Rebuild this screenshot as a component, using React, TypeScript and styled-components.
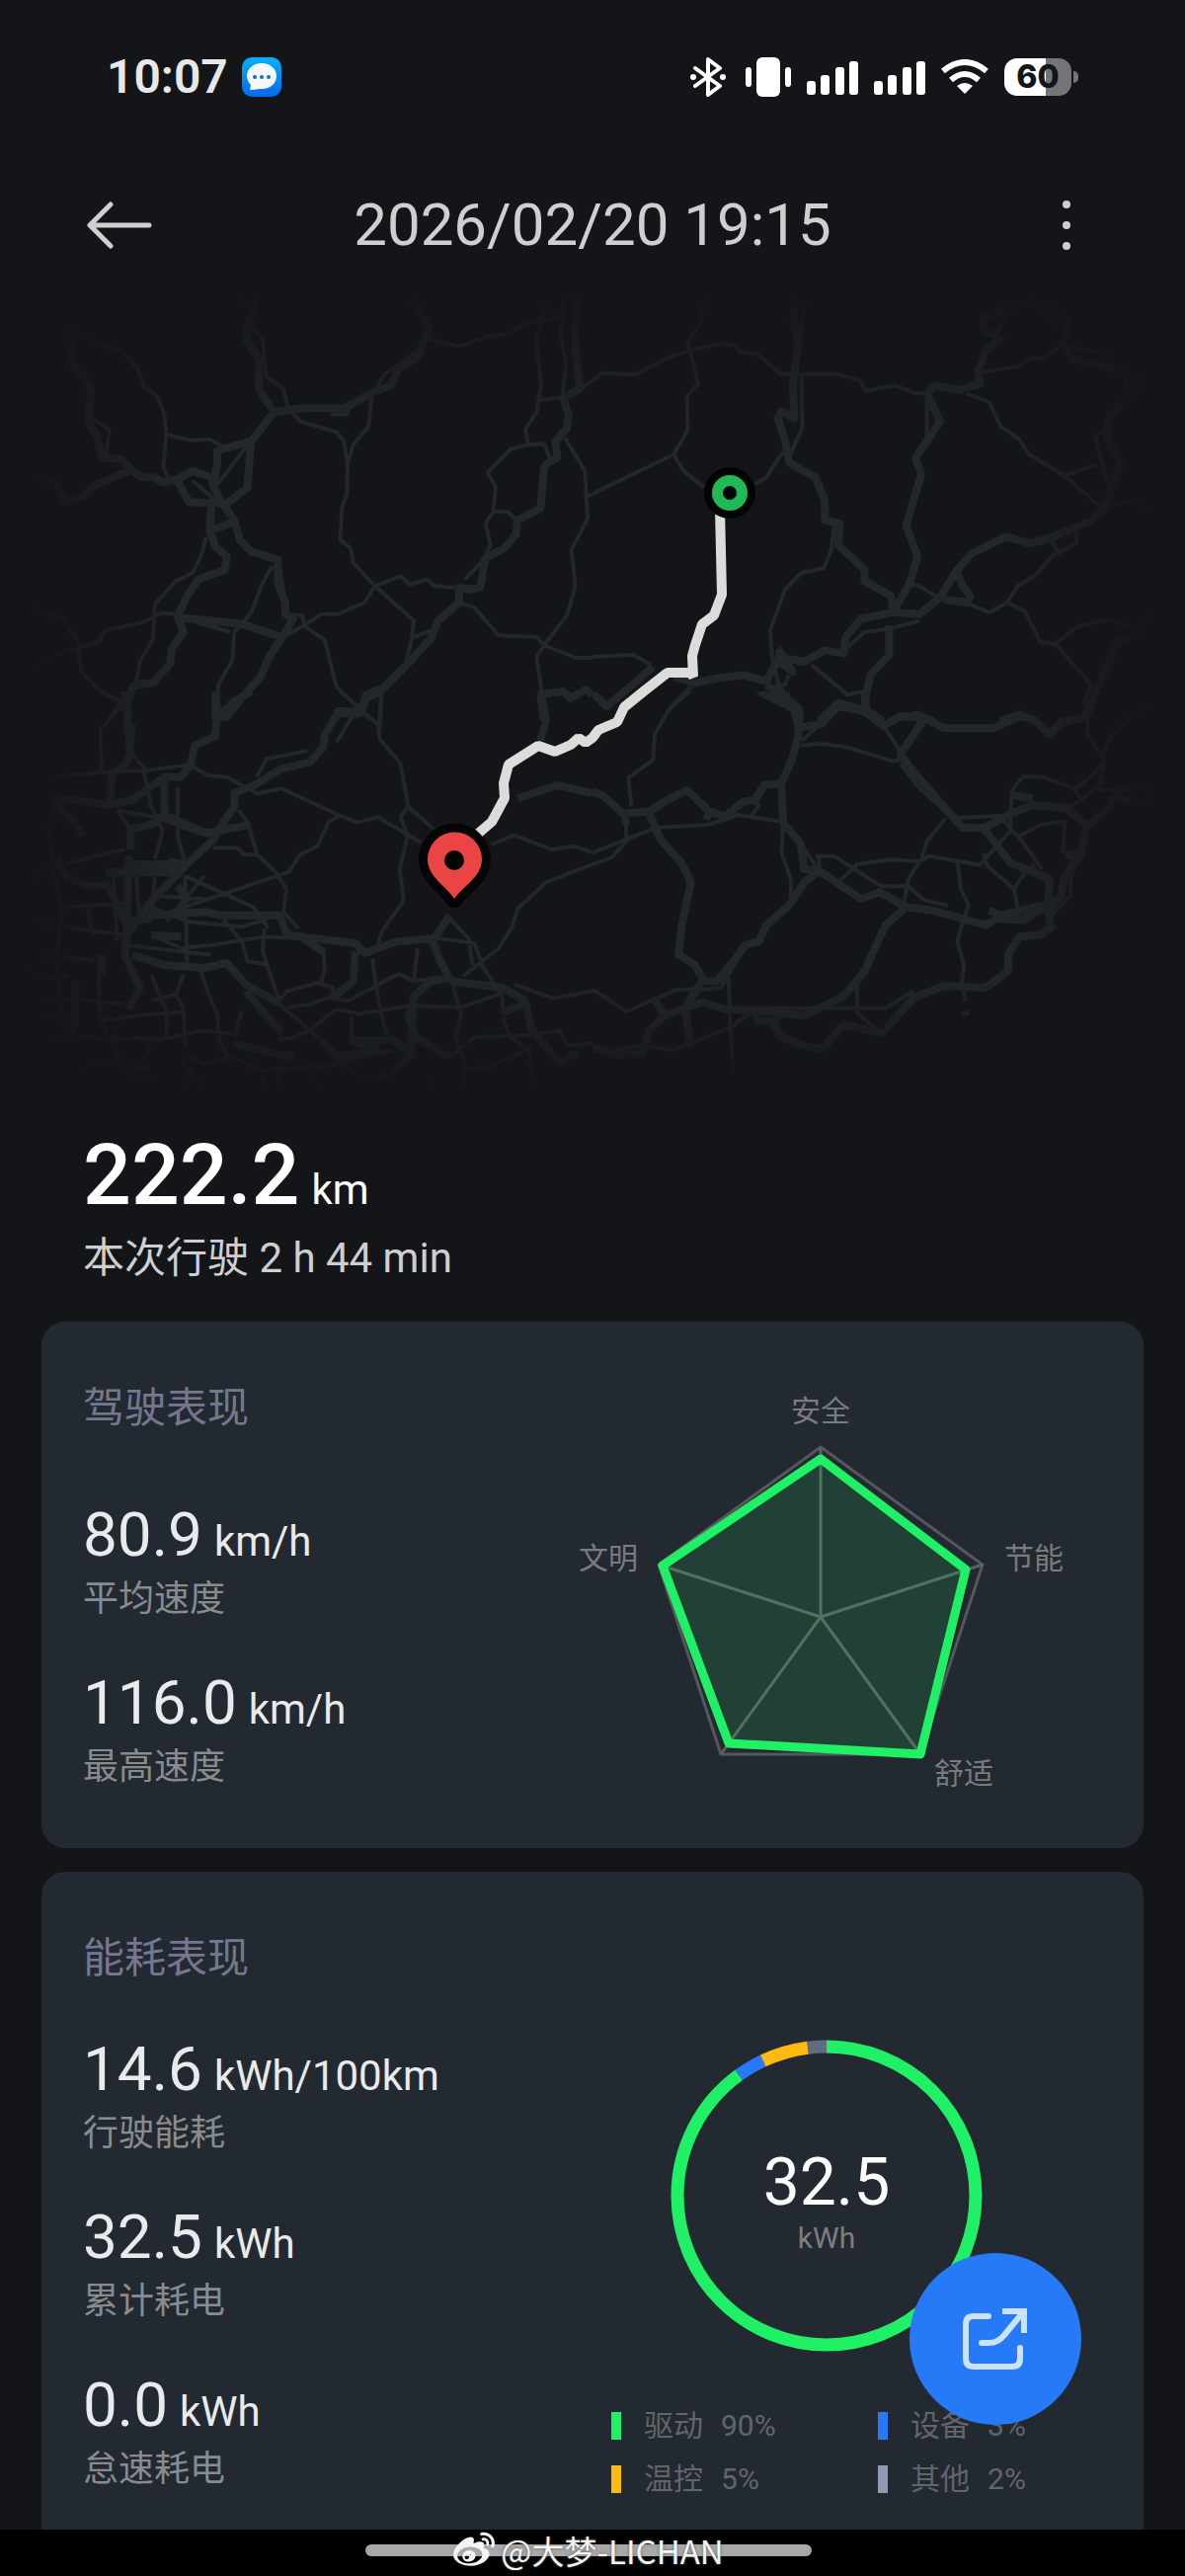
import styled, { createGlobalStyle } from "styled-components";
import { FaWeibo } from "react-icons/fa";

const GREEN = "#20f066";
const BLUE = "#267af8";
const YELLOW = "#ffba0f";

const usage = [
  { name: "驱动", percent: 90, color: GREEN, arc: GREEN },
  { name: "设备", percent: 3, color: BLUE, arc: BLUE },
  { name: "温控", percent: 5, color: YELLOW, arc: YELLOW },
  { name: "其他", percent: 2, color: "#8f9ab5", arc: "#5f6b7f" },
];

const driving = [
  { value: "80.9", unit: "km/h", label: "平均速度" },
  { value: "116.0", unit: "km/h", label: "最高速度" },
];

const energy = [
  { value: "14.6", unit: "kWh/100km", label: "行驶能耗" },
  { value: "32.5", unit: "kWh", label: "累计耗电" },
  { value: "0.0", unit: "kWh", label: "怠速耗电" },
];

// clockwise from the top
const scores = [0.93, 0.9, 1, 0.92, 0.98];

// the base map is cut in four tiles, each in its own 1568 x 1350 grid
const tiles = [
  {
    x: 0,
    y: 280,
    major:
      "M185,150L188,265 240,335 235,445 258,490 270,550 320,555 350,590 375,610 410,610 430,625 470,615 510,590 560,610 565,640 590,690 620,740 635,800 665,835 735,860 735,930 755,990 755,1025 775,1040 750,1090 710,1160 690,1215 640,1280 590,1350 570,1340 570,1275M80,615L145,622 172,685 225,665 250,635 340,590M680,40L665,100 650,190 685,250 685,340 725,412 665,500 600,520 575,530 575,570 565,640M665,500L660,560 655,640 600,690 500,685 470,620M725,412L800,400 910,400 990,350 1035,330 1055,280 1105,245 1135,160 1110,100 1085,80 1120,40M875,412L925,412M560,690L555,770 570,820 600,850 595,890 525,920 495,970 470,1030 485,1080 455,1130 450,1175 405,1235 355,1240 335,1290 340,1350M470,1035L640,1055 745,1095M560,770L620,745M1525,50L1522,220 1535,340 1490,370 1505,420 1500,460 1470,500 1475,550 1445,570 1440,580 1430,705 1370,740 1365,785 1335,825 1285,855 1270,945 1250,950 1215,945 1215,990 1160,1045 1140,1100 1080,1175 1015,1250 970,1270 955,1320 895,1320 885,1350M1425,1270L1490,1260 1510,1280 1550,1255 1568,1270M1430,1270L1440,1350",
    minor:
      "M190,165L255,205 315,220 365,280 380,335 415,360 435,420 440,480 432,580 445,610M440,480L505,497 555,495 595,520M665,150L695,190 705,305 750,340 762,400 795,440 890,472 910,500 920,570 918,660 905,700 900,800 928,825 935,870 992,940 1095,1045 1090,1100 1075,1170M600,40L665,90M990,350L1015,300 1105,225M985,350L975,455 935,510 920,570M1135,190L1215,212 1290,182 1345,175 1395,142 1485,125M1445,30L1438,130 1420,190 1432,330 1420,410 1390,465 1398,510 1350,525 1290,595 1312,640 1305,715 1285,750 1298,815 1280,860 1230,920M1430,375L1490,365M1398,510L1440,508 1455,550M1490,40L1485,190 1498,260 1488,365M1495,490L1548,590 1555,735 1512,830 1523,940 1500,1030 1440,1120 1420,1155 1435,1270M1305,715L1345,715 1365,740M992,940L1060,910 1085,935 1130,920 1150,940 1210,945M992,940L965,990 895,1025 850,1025 805,1060 750,1095M805,1060L860,1105 890,1245 985,1350M1215,990L1255,1005 1320,1090 1420,1095 1440,1120 1525,1158 1568,1158M1095,1095L1140,1075M755,1025L800,1030 805,1060M545,790L535,840 510,900 465,925 410,995 405,1100 370,1170 360,1235 285,1350M720,880L695,930 665,1020 640,1055 620,1080 615,1165 578,1240 575,1340M470,1025L425,1022 385,1048 280,1075 260,1110 165,1140 80,1195M60,950L105,1020 160,1035 205,1105 215,1200 255,1250 320,1290M650,520L570,640M510,620L600,710M240,430L290,465 280,540M1010,1250L1005,1350M740,880L755,990M520,1050L610,1080M1568,315L1535,345M1568,660L1550,670",
  },
  {
    x: 600,
    y: 280,
    major:
      "M540,60L530,130 545,200 530,330 535,430 500,410 490,430 510,500 520,565 590,610 615,680 615,740 655,750 650,815 720,890 720,925 790,970 795,1015M885,355L920,440 855,550 870,600 830,755 860,850 840,930 800,1010M885,355L905,330 970,345 1025,325 1020,290 1040,225 1080,190 1035,160 1035,125 1075,105 1165,70M1185,85L1235,95 1260,150 1245,200 1270,250 1340,270 1440,300 1440,350 1370,420 1360,490 1400,565 1355,700 1325,740 1240,780 1210,795 1155,810 1095,790 1005,840 965,890 920,975 865,1025 795,1020 710,1040 670,1095 665,1145 615,1135 560,1170 510,1160 490,1130M965,900L980,940 1000,970 990,990 930,980M785,1060L785,1150 735,1210 720,1290 725,1325M215,1215L270,1235 330,1220 400,1210 460,1230 490,1165 530,1200 490,1140M460,1240L545,1310 550,1350M600,1350L650,1295 720,1315 770,1350M790,1350L860,1330 900,1350M1080,1350L1130,1330 1170,1350M1310,1330L1340,1240 1390,1110 1440,1090 1500,1000M0,1265L38,1305 90,1255 160,1185",
    minor:
      "M0,318L25,292 110,298 215,238 330,205 375,207 390,228 435,235 498,296 645,296 708,315 722,348 800,330 855,355 885,355M320,30L290,90 288,140 252,200 280,325 250,365 252,465 215,540 0,660M215,540L240,590 295,640M430,630L460,610 500,538 525,535 555,460 553,300M575,20L545,200M885,360L885,490M640,750L632,830 612,885 552,900 510,950 470,1075 475,1150 490,1230 530,1310M990,355L1050,382 1080,455 1130,495 1155,540 1250,605 1345,700 1420,685 1500,710M1250,605L1335,570M1355,460L1330,490 1370,650M1030,290L1130,272 1160,245 1190,250 1240,210M1120,85L1060,180M1180,90L1230,170M1250,210L1365,235 1400,300M830,940L860,937 905,968 990,992 1050,1020 1098,990 1145,1018 1185,1110 1225,1115 1320,1240 1300,1300M1098,990L1125,940 1170,910 1215,850 1280,810 1280,775M1210,795L1240,850M1225,1115L1285,1062 1365,1042 1440,1070M0,1155L108,1148 155,1180M262,1245L205,1310 185,1350M580,1180L675,1270 720,1260M865,1045L785,1070 720,1080 670,1130M460,1250L510,1240 520,1210M1410,300L1415,350 1450,390M1440,290L1485,330",
  },
  {
    x: 0,
    y: 700,
    major:
      "M570,0L575,60 570,135 515,165 505,220 480,260 435,260 350,330 290,345 200,330 150,330M665,0L620,30 575,80M330,0L345,190 330,225 295,250 290,345M1010,0L970,20 955,65 895,65 860,130 855,170 820,215 745,235 680,280 620,310 620,350 590,400 565,450 490,530 440,590 390,650 335,740 330,800 370,900 340,970M435,260L435,375 545,430 660,405M345,480L345,420 410,400 435,375M340,500L335,760M345,525L490,525M280,550L480,550M390,680L545,670 580,680 740,680 760,740 940,765 965,795 1050,760 1150,750 1190,680M400,740L480,745M350,800L430,830 540,840 600,825 650,890 735,945M650,910L700,980 745,1035M1145,760L1165,820 1190,870 1140,880 1100,920 1080,990 1100,1050 1190,1110M1190,880L1330,900 1390,940 1405,1020 1480,1130 1530,1095M940,790L935,880 880,930M1390,950L1330,975M1370,325L1475,285 1568,310M1430,0L1445,90 1430,150M180,370L220,440M130,300L150,340 180,380M850,1060L890,1110 1000,1090 930,1060 1040,1060 1100,1110M620,1070L760,1110 780,1100M200,880L200,1000 180,1060M270,800L270,860M150,510L170,560 230,590 290,590M290,600L330,700 400,690M1090,1100L1040,1160M470,590L500,640M790,740L860,795M1095,920L1085,1110",
    minor:
      "M260,0L330,35 265,115 270,240M355,100L345,190 385,235M130,262L270,245 385,240 505,222M505,225L550,255 600,260 680,310 745,295 895,375 945,398 1000,382 1115,460M680,260L705,205 815,180M890,155L930,80 960,65M900,0L1000,100 1005,145 1060,220 1080,350 1150,420M1010,0L1003,140M1080,350L1060,380 1078,440 1058,540 1068,635 1010,730 995,790M895,380L870,395 840,470 795,495 765,548 605,610 395,690M630,360L655,395 680,495 730,550 758,600 750,670 790,720M565,475L630,475 645,495 680,495M490,560L670,655 710,720M380,240L400,350 430,420 410,510M470,290L470,440 490,520 445,510M310,360L420,385 550,440M310,360L345,420M130,540L250,500 330,480M150,340L125,400 145,560 165,660 150,800 160,950 180,1050M165,655L330,645M80,580L160,500M80,700L330,740M90,800L250,815M230,650L245,740M75,720L80,860M80,940L200,935 330,950M260,800L265,1000 300,1080M400,740L480,780 560,770 700,745 790,750M590,690L640,760 655,820 710,830M700,720L695,790 715,860 740,940M530,840L545,900 575,980 580,1060 605,1110M485,860L465,920 400,940M465,920L485,960 490,1080M400,860L440,970 440,1050M735,945L760,910 840,885 880,900 880,930 920,940 1055,858 1095,880 1150,870M760,960L820,950 880,925M735,945L850,1060M855,790L860,840 850,885M985,810L1000,930 1015,1010 1030,1060M890,965L950,980 1080,955 1220,960 1320,920M890,965L820,1030 780,1050M930,990L930,1060M1190,690L1240,750 1250,830M1160,750L1255,765 1280,840 1330,930 1330,980M1105,780L1095,880M1195,880L1220,980 1205,1050 1230,1130 1225,1220M1225,865L1320,780 1355,715 1370,660 1445,580 1568,525M1300,465L1360,437 1460,480 1520,470 1568,490M1360,890L1465,932 1568,910M1190,1110L1255,1050 1405,1045 1480,1030 1500,1075 1568,1070M1230,1148L1300,1140 1400,1085 1410,1200M1330,990L1350,1050 1400,1090M350,1050L420,1060 530,1030 620,1042M620,1050L640,970M745,1040L740,1060 780,1050M605,1110L540,1135 500,1110M400,1080L350,1160M480,1120L550,1220M690,1150L700,1230M740,1130L735,1240M80,1180L200,1170 240,1120 400,1150M270,1000L400,980 480,975M300,1040L320,1160 410,1180M820,1150L850,1220M900,1130L960,1180 1040,1160M1140,1160L1150,1210 1040,1240 920,1220M500,1170L500,1230M490,560L495,840M390,650L500,700 640,715 710,690M300,560L310,760M360,560L370,700M400,620L540,630M330,770L560,800M410,560L400,680M80,1050L350,1055M90,870L180,865M80,980L160,1000 210,1060M610,1110L690,1150 850,1140 1040,1090M540,560L440,700",
  },
  {
    x: 600,
    y: 700,
    major:
      "M440,0L545,60 545,130 530,200 500,280 455,285 430,330 400,335 350,380 310,365 250,300 190,335 150,365 80,370 25,315 0,305M150,370L180,450 235,520 260,580 235,720 228,800 270,830 295,880 330,880 380,810 405,770 440,760 460,710 520,650 560,580 600,545 710,630 760,610 830,655 900,665 1040,710 1070,690 1140,695 1200,650 1215,715 1185,740 1130,745 1100,800 1100,850 1040,900 930,895 850,930 765,1040 665,1010 610,1085 570,1080 500,1050 480,1015 490,985M300,390L310,365M500,290L505,400 550,460 560,540 600,545M545,110L605,100 650,45 720,60 770,105 815,75 880,80 930,112 1060,112 1130,75 1165,85 1210,130 1240,95 1300,80 1335,0M880,80L815,190 850,245 960,390 980,415 1035,415 1105,520 1210,570 1205,650M1035,415L1110,370 1165,345 1255,355 1310,410 1290,490 1250,500M1310,410L1370,350 1380,320 1440,340 1500,320M1115,315L1165,325M1250,560L1240,620 1210,660M1290,490L1250,560M830,655L775,710 720,850 665,925 560,985 430,970 350,965 290,945 190,985 150,1030 130,1100 60,1105 0,1080M290,880L245,960 258,1080M165,940L190,980M720,0L725,55M430,975L440,1000 495,1005M1050,665L1080,680 1190,650M985,970L988,985M85,370L90,405",
    minor:
      "M258,0L205,50 165,130 160,208 95,262 103,350M88,380L90,455 50,505 0,525M0,490L165,415 305,405 385,375 500,395M345,380L420,330 440,345 420,380M515,0L545,130M550,165L600,158 675,170 795,212 820,205M555,150L600,100M770,105L820,190M935,385L885,455 870,510 835,570 825,640M505,400L500,490 525,570 525,640M555,470L600,545M590,500L640,500 765,592 835,592 880,635 940,650M600,500L600,545M655,575L700,525 790,510 865,517 890,500 1025,527 1105,425 1110,300 1140,258 1190,260 1275,295 1290,325M1275,295L1325,255 1355,210 1310,130 1310,70M1355,215L1340,290 1260,355M1340,300L1500,295M1350,190L1370,140 1430,70 1500,35M960,385L1075,378 1130,445 1190,540M1130,440L1185,405 1250,395 1245,490M1035,490L1045,530 1115,600 1130,680M1115,600L1145,550 1170,525M965,510L975,600 995,650 980,700 965,760 983,830 978,880 987,940M1300,490L1265,560 1265,620 1215,680M700,890L700,975 765,1040M295,905L225,905 90,972 0,905M290,905L340,900 390,800M360,870L365,1020 373,1165M420,975L365,1020 300,1050 210,1090 130,1075 60,1090M410,962L775,962 850,910M815,220L870,300 940,370",
  },
];

const route =
  "M729,515L731,602 723,623 711,632 704,653 701,664 702,685 699,681 676,681 653,699 632,716 625,731 606,739 600,747 593,752 586,747 578,754 562,761 545,755 515,774 510,793 511,808 498,832 484,844";

const polar = (cx: number, cy: number, r: number, index: number) => {
  const angle = (index * 2 * Math.PI) / 5;
  return `${Math.round(cx + r * Math.sin(angle))},${Math.round(cy - r * Math.cos(angle))}`;
};

const StatusIcons = () => (
  <IconRow>
    <svg width="40" height="40" viewBox="0 0 40 40" fill="none" stroke="#fff" strokeWidth="4" strokeLinecap="round" strokeLinejoin="round">
      <path d="M5 11L30 29 18 38V2L30 11 5 29" />
      <circle cx="3" cy="20" r="3" fill="#fff" stroke="none" />
      <circle cx="33" cy="20" r="3" fill="#fff" stroke="none" />
    </svg>
    <svg width="46" height="40" viewBox="0 0 46 40" fill="#fff">
      <rect x="0" y="10" width="6" height="20" rx="3" />
      <rect x="11" y="0" width="24" height="40" rx="6" />
      <rect x="40" y="10" width="6" height="20" rx="3" />
    </svg>
    <Signal />
    <Signal />
    <svg width="48" height="36" viewBox="0 0 48 36" fill="none" stroke="#fff" strokeWidth="6">
      <path d="M2 12Q24 -6 46 12" />
      <path d="M10 21Q24 9 38 21" />
      <path d="M24 35L16 27Q24 21 32 27Z" fill="#fff" stroke="none" />
    </svg>
    <Battery>
      <BatteryLevel>60</BatteryLevel>
      <BatteryNub />
    </Battery>
  </IconRow>
);

const Signal = () => (
  <svg width="52" height="40" viewBox="0 0 52 40" fill="#fff">
    <rect x="0" y="24" width="9" height="14" rx="3" />
    <rect x="14" y="18" width="9" height="20" rx="3" />
    <rect x="29" y="10" width="9" height="28" rx="3" />
    <rect x="43" y="4" width="9" height="34" rx="3" />
  </svg>
);

const RouteMap = () => (
  <MapArea viewBox="0 300 1200 830" role="img" aria-label="行驶路线">
    <MapBase>
      {tiles.map((tile) => (
        <svg
          key={`${tile.x}-${tile.y}`}
          x={tile.x}
          y={tile.y}
          width="600"
          height="450"
          viewBox="0 0 1568 1350"
          preserveAspectRatio="none"
        >
          <Road d={tile.minor} $width={4} />
          <Road d={tile.major} $width={8} />
        </svg>
      ))}
    </MapBase>
    <path d={route} fill="none" stroke="#dcdcda" strokeWidth="10" strokeLinejoin="bevel" />
    <circle cx="739" cy="499" r="26" fill="#030504" />
    <circle cx="739" cy="499" r="18" fill="#20b956" />
    <circle cx="739" cy="499" r="7" fill="#030504" />
    <path
      d="M460 910C453 898 433 888 433 870A27 27 0 0 1 488 870C488 888 468 898 460 910Z"
      fill="#ea4444"
      stroke="#050506"
      strokeWidth="18"
      strokeLinejoin="round"
      paintOrder="stroke"
    />
    <circle cx="460" cy="871" r="10" fill="#050506" />
  </MapArea>
);

const Radar = () => {
  const cx = 271;
  const cy = 239;
  return (
    <RadarChart viewBox="0 0 554 420" role="img" aria-label="驾驶评分">
      <polygon
        points={scores.map((_, i) => polar(cx, cy, 172, i)).join(" ")}
        fill="none"
        stroke="#56575c"
        strokeWidth="3"
      />
      {scores.map((_, i) => (
        <path key={i} d={`M${cx},${cy}L${polar(cx, cy, 172, i)}`} stroke="#5b605f" strokeWidth="3" />
      ))}
      <polygon
        points={scores.map((score, i) => polar(cx, cy, 172 * score, i)).join(" ")}
        fill="rgba(32, 240, 102, 0.12)"
        stroke={GREEN}
        strokeWidth="9"
        strokeLinejoin="round"
      />
      <text x="271" y="41" textAnchor="middle">安全</text>
      <text x="457" y="190">节能</text>
      <text x="386" y="408">舒适</text>
      <text x="26" y="190">文明</text>
    </RadarChart>
  );
};

const Donut = () => {
  let start = 0;
  return (
    <DonutBox>
      <svg viewBox="0 0 316 316" fill="none" strokeWidth="13">
        {usage.map(({ name, percent, arc }) => {
          const offset = -start;
          start += percent;
          return (
            <circle
              key={name}
              cx="158"
              cy="158"
              r="151"
              pathLength="100"
              stroke={arc}
              strokeDasharray={`${percent} ${100 - percent}`}
              strokeDashoffset={offset}
              transform="rotate(-90 158 158)"
            />
          );
        })}
      </svg>
      <DonutText>
        <DonutValue>32.5</DonutValue>
        <DonutUnit>kWh</DonutUnit>
      </DonutText>
    </DonutBox>
  );
};

const StatList = ({ items }: { items: typeof driving }) => (
  <Stats>
    {items.map(({ value, unit, label }) => (
      <Stat key={label}>
        <StatValue>
          {value}
          <Unit>{unit}</Unit>
        </StatValue>
        <StatLabel>{label}</StatLabel>
      </Stat>
    ))}
  </Stats>
);

const App = () => {
  return (
    <Page>
      <GlobalStyle />
      <StatusBar>
        <Clock>10:07</Clock>
        <svg width="40" height="40" viewBox="0 0 40 40">
          <defs>
            <linearGradient id="message" x1="0" y1="0" x2="0" y2="1">
              <stop offset="0" stopColor="#04b0fb" />
              <stop offset="1" stopColor="#0768ee" />
            </linearGradient>
          </defs>
          <rect width="40" height="40" rx="10" fill="url(#message)" />
          <path d="M20 6C11 6 5 12 5 19C5 23 7 26 9 28L8 33C14 33 15 32 20 32C29 32 35 26 35 19S29 6 20 6Z" fill="#f4f8fd" />
          <g fill="#1670b8">
            <circle cx="13" cy="20" r="2" />
            <circle cx="20" cy="20" r="2" />
            <circle cx="27" cy="20" r="2" />
          </g>
        </svg>
        <StatusIcons />
      </StatusBar>
      <Header>
        <IconButton aria-label="返回">
          <svg width="66" height="48" viewBox="0 0 66 48" fill="none" stroke="#cfcfd0" strokeWidth="5" strokeLinecap="round" strokeLinejoin="round">
            <path d="M24 3L3 24 24 45M3 24H63" />
          </svg>
        </IconButton>
        <Title>2026/02/20 19:15</Title>
        <IconButton aria-label="更多">
          <svg width="66" height="52" viewBox="0 0 66 52" fill="#cfcfd0">
            <circle cx="34" cy="5" r="4" />
            <circle cx="34" cy="26" r="4" />
            <circle cx="34" cy="47" r="4" />
          </svg>
        </IconButton>
      </Header>
      <RouteMap />
      <Summary>
        <Distance>
          222.2
          <Unit>km</Unit>
        </Distance>
        <Duration>本次行驶 2 h 44 min</Duration>
      </Summary>
      <Card>
        <div>
          <CardTitle $gap={64}>驾驶表现</CardTitle>
          <StatList items={driving} />
        </div>
        <Radar />
      </Card>
      <Card $last>
        <div>
          <CardTitle $gap={48}>能耗表现</CardTitle>
          <StatList items={energy} />
        </div>
        <Consumption>
          <Donut />
          <Legend>
            {usage.map(({ name, percent, color }) => (
              <LegendItem key={name}>
                <Swatch $color={color} />
                <LegendName>{name}</LegendName>
                <span>{percent}%</span>
              </LegendItem>
            ))}
          </Legend>
        </Consumption>
      </Card>
      <BottomBar>
        <HomeIndicator />
        <Watermark>
          <FaWeibo size={42} />
          @大梦-LICHAN
        </Watermark>
      </BottomBar>
      <ShareButton aria-label="分享">
        <svg width="66" height="62" viewBox="0 0 66 62" fill="none" stroke="#cbe1fd" strokeWidth="6" strokeLinecap="round" strokeLinejoin="round">
          <path d="M26 8H11Q3 8 3 16V51Q3 59 11 59H50Q58 59 58 51V40" />
          <path d="M40 3H62V25" strokeLinecap="butt" strokeLinejoin="miter" />
          <path d="M61 4L42 27Q36 35 26 35H19" />
        </svg>
      </ShareButton>
    </Page>
  );
};

const GlobalStyle = createGlobalStyle`
  * {
    box-sizing: border-box;
  }

  body {
    margin: 0;
    background: #131519;
  }

  button {
    padding: 0;
    border: none;
    background: none;
    cursor: pointer;
  }

  svg {
    display: block;
  }
`;

const Page = styled.main`
  display: flex;
  flex-direction: column;
  min-height: 100vh;
  background: #131519;
  color: #e9eaec;
  font-family: Roboto, "Noto Sans CJK SC", sans-serif;
`;

const StatusBar = styled.div`
  display: flex;
  align-items: center;
  gap: 14px;
  height: 156px;
  padding: 0 108px;
`;

const Clock = styled.time`
  color: #e8e8e9;
  font-size: 48px;
  font-weight: 600;
  line-height: 56px;
`;

const IconRow = styled.div`
  display: flex;
  align-items: center;
  gap: 16px;
  margin-left: auto;
`;

const Battery = styled.div`
  display: flex;
  align-items: center;
  gap: 2px;
`;

const BatteryLevel = styled.span`
  width: 68px;
  border-radius: 13px;
  background: linear-gradient(90deg, #fff 62%, #747579 62%);
  color: #131519;
  font-family: Inter, sans-serif;
  font-size: 32px;
  font-weight: 800;
  line-height: 38px;
  text-align: center;
`;

const BatteryNub = styled.span`
  width: 5px;
  height: 12px;
  border-radius: 0 6px 6px 0;
  background: #747579;
`;

const Header = styled.header`
  display: flex;
  align-items: center;
  justify-content: space-between;
  height: 144px;
  padding: 0 88px;
`;

const IconButton = styled.button`
  flex: none;
`;

const Title = styled.h1`
  margin: 0;
  color: #cfcfd0;
  font-size: 60px;
  font-weight: 400;
  line-height: 72px;
`;

const MapArea = styled.svg`
  width: 100%;
  height: auto;
`;

const MapBase = styled.g`
  mask-image: linear-gradient(90deg, transparent, #000 14%, #000 86%, transparent),
    linear-gradient(transparent, #000 18%, #000 84%, transparent);
  mask-composite: intersect;
`;

const Road = styled.path<{ $width: number }>`
  fill: none;
  stroke: #22272c;
  stroke-width: ${({ $width }) => $width}px;
  stroke-linejoin: round;
  vector-effect: non-scaling-stroke;
`;

const Summary = styled.section`
  padding: 16px 84px 36px;
`;

const Distance = styled.div`
  display: flex;
  align-items: baseline;
  gap: 12px;
  height: 88px;
  color: #fff;
  font-size: 86px;
  font-weight: 500;
  line-height: 88px;
`;

const Unit = styled.span`
  font-size: 42px;
  font-weight: 400;
  line-height: 48px;
`;

const Duration = styled.div`
  margin-top: 12px;
  color: #cfcfd1;
  font-size: 42px;
  line-height: 56px;
`;

const Card = styled.section<{ $last?: boolean }>`
  display: grid;
  grid-template-columns: 476fr 554fr;
  flex: ${({ $last }) => ($last ? "1" : "none")};
  margin: ${({ $last }) => ($last ? "0 42px" : "0 42px 24px")};
  padding: ${({ $last }) => ($last ? "60px 44px 24px 42px" : "60px 44px 53px 42px")};
  border-radius: ${({ $last }) => ($last ? "24px 24px 0 0" : "24px")};
  background: #232930;
`;

const CardTitle = styled.h2<{ $gap: number }>`
  margin: 0 0 ${({ $gap }) => $gap}px;
  color: #74778f;
  font-size: 42px;
  font-weight: 400;
  line-height: 56px;
`;

const Stats = styled.div`
  display: flex;
  flex-direction: column;
  gap: 40px;
`;

const Stat = styled.div`
  white-space: nowrap;
`;

const StatValue = styled.div`
  display: flex;
  align-items: baseline;
  gap: 12px;
  font-size: 62px;
  line-height: 72px;
`;

const StatLabel = styled.div`
  color: #898b8f;
  font-size: 36px;
  line-height: 58px;
`;

const RadarChart = styled.svg`
  width: 100%;

  text {
    fill: #7a7b80;
    font-size: 30px;
  }
`;

const Consumption = styled.div`
  display: flex;
  flex-direction: column;
  align-items: center;
  padding-top: 110px;
`;

const DonutBox = styled.div`
  display: grid;
  width: 316px;
  height: 316px;

  > * {
    grid-area: 1 / 1;
  }
`;

const DonutText = styled.div`
  align-self: center;
  padding-top: 14px;
  text-align: center;
`;

const DonutValue = styled.div`
  color: #fff;
  font-size: 66px;
  line-height: 72px;
`;

const DonutUnit = styled.div`
  color: #7c7e83;
  font-size: 30px;
  line-height: 40px;
`;

const Legend = styled.ul`
  display: grid;
  grid-template-columns: 270fr 225fr;
  align-self: stretch;
  margin: 48px 0 0;
  padding: 0 0 0 59px;
  list-style: none;
`;

const LegendItem = styled.li`
  display: flex;
  align-items: center;
  color: #62656a;
  font-size: 30px;
  line-height: 54px;
`;

const Swatch = styled.span<{ $color: string }>`
  width: 10px;
  height: 28px;
  margin-right: 23px;
  background: ${({ $color }) => $color};
`;

const LegendName = styled.span`
  margin-right: 18px;
`;

const BottomBar = styled.footer`
  display: grid;
  place-items: center;
  height: 48px;
  padding: 0 8px 8px 0;
  background: #000;

  > * {
    grid-area: 1 / 1;
  }
`;

const HomeIndicator = styled.div`
  width: 38%;
  height: 12px;
  border-radius: 6px;
  background: #a8a8a8;
`;

const Watermark = styled.div`
  display: flex;
  align-items: center;
  gap: 6px;
  color: #f4f4f4;
  font-family: "Noto Sans CJK SC", sans-serif;
  font-size: 33px;
  line-height: 40px;
  text-shadow: 0 0 3px #555;
`;

// floats above the cards while the page scrolls
const ShareButton = styled.button`
  position: fixed;
  right: 105px;
  bottom: 153px;
  display: grid;
  place-items: center;
  width: 174px;
  height: 174px;
  && {
    border-radius: 50%;
    background: ${BLUE};
  }
`;

export default App;
